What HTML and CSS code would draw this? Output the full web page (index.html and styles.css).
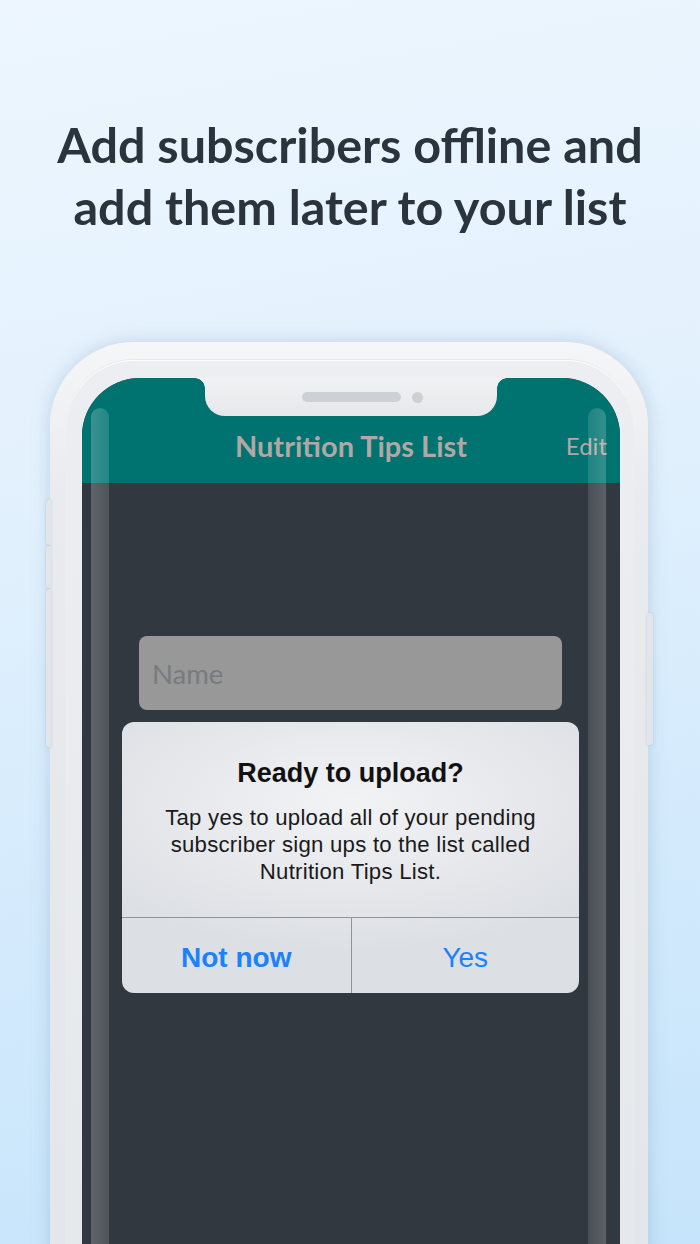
FILE: index.html
```html
<!DOCTYPE html>
<html lang="en">
<head>
<meta charset="utf-8">
<title>Add subscribers offline</title>
<link rel="stylesheet" href="styles.css">
</head>
<body>
<div class="page">
  <h1 class="headline">Add subscribers offline and<br>add them later to your list</h1>
  <div class="phone">
    <span class="side-btn side-l1"></span>
    <span class="side-btn side-l2"></span>
    <span class="side-btn side-l3"></span>
    <span class="side-btn side-r1"></span>
    <div class="bezel">
      <div class="screen">
        <div class="notch"><span class="speaker"></span><span class="camera"></span></div>
        <header class="navbar">
          <span></span>
          <span class="nav-title">Nutrition Tips List</span>
          <span class="nav-edit">Edit</span>
        </header>
        <main class="content">
          <div class="field">Name</div>
          <div class="alert">
            <div class="alert-body">
              <div class="alert-title">Ready to upload?</div>
              <p class="alert-msg">Tap yes to upload all of your pending subscriber sign ups to the list called Nutrition Tips List.</p>
            </div>
            <div class="alert-actions">
              <button class="alert-btn alert-btn-bold">Not now</button>
              <button class="alert-btn">Yes</button>
            </div>
          </div>
        </main>
        <span class="gloss gloss-l"></span>
        <span class="gloss gloss-r"></span>
      </div>
    </div>
  </div>
</div>
</body>
</html>
```

FILE: styles.css
```css
* { box-sizing: border-box; }
html, body { margin: 0; padding: 0; }
body {
  width: 700px;
  height: 1244px;
  overflow: hidden;
  background: linear-gradient(170deg, #edf6fe 0%, #e3f1fd 35%, #d3eafc 70%, #c6e4fb 100%);
}
.page {
  height: 1244px;
  overflow: hidden;
}
.headline {
  margin: 0;
  padding-top: 113px;
  text-align: center;
  font-family: "Lato", "Noto Sans", sans-serif;
  font-weight: 700;
  font-size: 48.5px;
  line-height: 62px;
  color: #2b343c;
}
.phone {
  position: relative;
  margin: 105px 0 0 50px;
  width: 598px;
  height: 1000px;
  border-radius: 84px 84px 0 0;
  background: linear-gradient(180deg, #f5f6f7 0%, #e9ebee 15%, #e2e5e9 100%);
  box-shadow: 0 0 18px rgba(120, 150, 180, 0.35);
  padding: 18px 14px 0 16px;
}
.side-btn {
  position: absolute;
  background: #e2e5e9;
  box-shadow: 0 0 3px rgba(120, 150, 180, 0.3);
}
.side-l1 { left: -4px; top: 158px; width: 5px; height: 45px; border-radius: 3px 0 0 3px; }
.side-l2 { left: -4px; top: 204px; width: 5px; height: 42px; border-radius: 3px 0 0 3px; }
.side-l3 { left: -4px; top: 247px; width: 5px; height: 158px; border-radius: 3px 0 0 3px; }
.side-r1 { right: -5px; top: 271px; width: 6px; height: 132px; border-radius: 0 3px 3px 0; }
.bezel {
  height: 100%;
  border-radius: 68px 68px 0 0;
  background: linear-gradient(180deg, #eceef1 0%, #e5e8eb 100%);
  box-shadow: inset 0 1px 1px rgba(255,255,255,0.9), 0 -1px 0 rgba(210,214,220,0.4);
  padding: 18px 14px 0 16px;
}
.screen {
  position: relative;
  height: 100%;
  border-radius: 58px 58px 0 0;
  overflow: hidden;
  background: #323840;
  display: flex;
  flex-direction: column;
}
.notch {
  position: absolute;
  top: 0;
  left: 50%;
  transform: translateX(-50%);
  width: 292px;
  height: 38px;
  background: linear-gradient(180deg, #f1f2f4 0%, #e5e7ea 100%);
  border-radius: 0 0 20px 20px;
  display: flex;
  justify-content: center;
  align-items: center;
  gap: 11px;
  padding-left: 22px;
  z-index: 3;
}
.notch::before, .notch::after {
  content: "";
  position: absolute;
  top: 0;
  width: 10px;
  height: 10px;
}
.notch::before {
  left: -10px;
  background: radial-gradient(circle at 0 100%, transparent 9.5px, #f1f2f4 10px);
}
.notch::after {
  right: -10px;
  background: radial-gradient(circle at 100% 100%, transparent 9.5px, #f1f2f4 10px);
}
.speaker {
  width: 99px;
  height: 10px;
  border-radius: 5px;
  background: #cdd1d5;
}
.camera {
  width: 11px;
  height: 11px;
  border-radius: 50%;
  background: #cdd1d5;
}
.navbar {
  height: 105px;
  background: #007370;
  display: grid;
  grid-template-columns: 1fr auto 1fr;
  align-items: end;
  padding: 0 13px 22px 13px;
  font-family: "Lato", "Noto Sans", sans-serif;
  color: #b1a8a4;
  line-height: 30px;
}
.nav-title {
  font-size: 29px;
  font-weight: 700;
}
.nav-edit {
  justify-self: end;
  font-size: 24px;
}
.content {
  flex: 1;
  padding: 153px 41px 0 40px;
  display: flex;
  flex-direction: column;
}
.field {
  margin: 0 17px 12px 17px;
  height: 74px;
  border-radius: 8px;
  background: #989898;
  padding-left: 13px;
  display: flex;
  align-items: center;
  font-family: "Lato", "Noto Sans", sans-serif;
  font-size: 27.5px;
  color: #777b7f;
}
.alert {
  border-radius: 12px;
  overflow: hidden;
  background: radial-gradient(ellipse 70% 55% at 50% 30%, #f2f3f5 0%, #e3e5e9 70%, #dcdfe3 100%);
  font-family: "Liberation Sans", Arial, sans-serif;
}
.alert-body {
  height: 196px;
  padding-top: 36px;
  text-align: center;
  border-bottom: 1px solid #8e949b;
}
.alert-title {
  font-size: 27px;
  font-weight: 700;
  line-height: 30px;
  color: #111;
}
.alert-msg {
  margin: 16px 30px 0 30px;
  font-size: 22.2px;
  letter-spacing: 0.25px;
  line-height: 27px;
  color: #1a1a1a;
}
.alert-actions {
  height: 75px;
  display: grid;
  grid-template-columns: 1fr 1fr;
}
.alert-btn {
  border: 0;
  background: transparent;
  font-family: "Liberation Sans", Arial, sans-serif;
  font-size: 28px;
  color: #1a82fb;
  padding: 4px 0 0 0;
}
.alert-btn + .alert-btn {
  border-left: 1px solid #8e949b;
}
.alert-btn-bold { font-weight: 700; }
.gloss {
  position: absolute;
  top: 30px;
  bottom: 0;
  width: 18px;
  border-radius: 18px 18px 0 0;
  z-index: 2;
  pointer-events: none;
}
.gloss-l {
  left: 9px;
  background: linear-gradient(90deg, rgba(255,255,255,0.22) 0%, rgba(255,255,255,0.14) 100%);
}
.gloss-r {
  right: 14px;
  background: linear-gradient(90deg, rgba(255,255,255,0.12) 0%, rgba(255,255,255,0.2) 100%);
}
```
